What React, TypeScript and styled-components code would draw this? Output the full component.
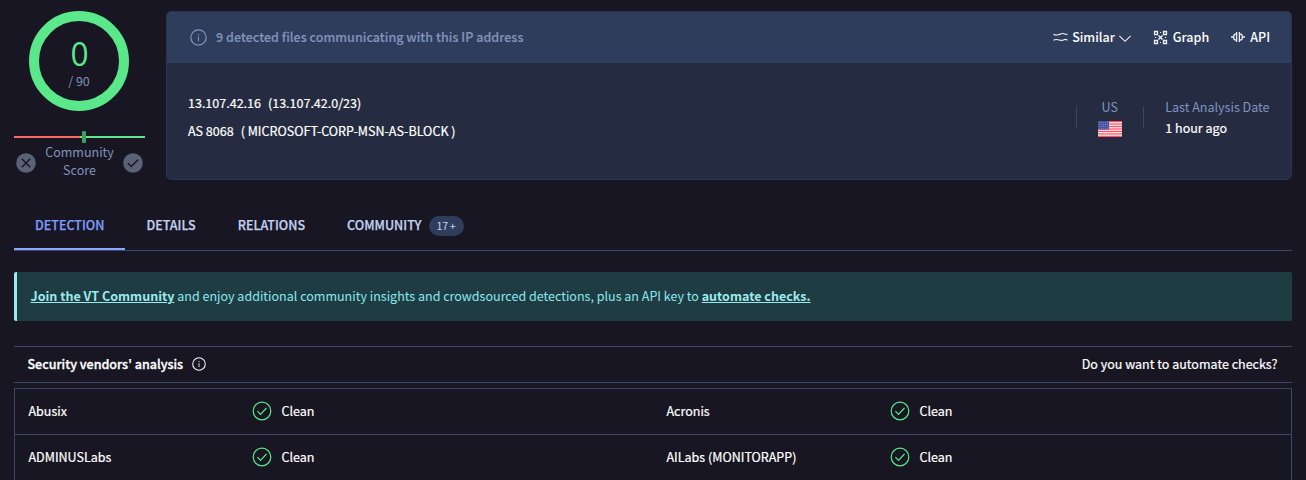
import React from "react";
import styled, { createGlobalStyle } from "styled-components";

const GlobalStyle = createGlobalStyle`
  *, *::before, *::after { box-sizing: border-box; }
  html, body { margin: 0; height: 480px; overflow: hidden; background: #171622; }
  body {
    color: #fff;
    font-family: "Noto Sans CJK SC", "Noto Sans CJK TC", "Liberation Sans", sans-serif;
    font-size: 12.53px;
    line-height: 18px;
  }
  svg { display: block; flex: none; }
`;

const Page = styled.main`
  display: flex;
  flex-direction: column;
  height: 480px;
  padding: 11px 14px 0;
  overflow: hidden;
`;

const Summary = styled.section`
  display: flex;
  flex: none;
  gap: 21px;
  height: 169px;
`;

const ScoreColumn = styled.div`
  display: flex;
  flex-direction: column;
  align-items: center;
  width: 131px;
`;

const Ring = styled.div`
  display: flex;
  flex-direction: column;
  align-items: center;
  width: 100px;
  height: 100px;
  padding-top: 16px;
  border: 10px solid #5ae88a;
  border-radius: 50%;
  margin-right: 1px;
`;

const Score = styled.div`
  margin-left: 1px;
  color: #5ae88a;
  font-size: 33px;
  font-weight: 350;
  line-height: 30px;
`;

const ScoreTotal = styled.div`
  margin-top: 5px;
  color: #8293bd;
  line-height: 18px;
`;

const ScoreBar = styled.div`
  display: flex;
  position: relative;
  width: 131px;
  height: 2px;
  margin-top: 25px;
`;

const BarHalf = styled.div<{ $color: string }>`
  flex: 1;
  background: ${(p) => p.$color};
`;

const BarHandle = styled.span`
  position: absolute;
  left: 68px;
  top: -5px;
  width: 4px;
  height: 12px;
  border-radius: 1px;
  background: #3c9f60;
`;

const Votes = styled.div`
  display: flex;
  justify-content: space-between;
  align-items: flex-start;
  width: 127px;
  margin-top: 5px;
  color: #8293bd;
  text-align: center;
  svg { margin-top: 10px; }
`;

const VoteLabel = styled.div`
  width: 75px;
`;

const Card = styled.div`
  display: flex;
  flex-direction: column;
  flex: 1;
  border: 1px solid #2a344f;
  border-radius: 5px;
  background: #252c42;
  overflow: hidden;
`;

const CardHeader = styled.header`
  display: flex;
  align-items: center;
  height: 51px;
  padding: 0 21px 1px 23px;
  background: #2f3d5c;
`;

const Notice = styled.div`
  display: flex;
  align-items: center;
  gap: 9px;
  color: #8293bd;
  font-weight: 500;
  -webkit-text-stroke: 0.15px currentColor;
  letter-spacing: 0.03px;
`;

const Actions = styled.nav`
  display: flex;
  gap: 22px;
  margin-left: auto;
`;

const Action = styled.a<{ $gap: number }>`
  display: flex;
  align-items: center;
  gap: ${(p) => p.$gap}px;
  color: #fff;
  font-weight: 500;
  svg { opacity: 0.92; }
`;

const CardBody = styled.div`
  display: flex;
  align-items: center;
  flex: 1;
  padding: 0 21.5px 8px 21px;
`;

const Addresses = styled.div`
  display: flex;
  flex-direction: column;
  gap: 10px;
  margin-top: -1px;
  -webkit-text-stroke: 0.2px currentColor;
`;

const AddressLine = styled.div`
  display: flex;
  gap: 7px;
`;

const Facts = styled.div`
  display: flex;
  align-items: center;
  margin-left: auto;
`;

const Divider = styled.span`
  width: 1px;
  height: 21px;
  background: #3a4767;
`;

const Fact = styled.div<{ $center?: boolean }>`
  display: flex;
  flex-direction: column;
  align-items: ${(p) => (p.$center ? "center" : "flex-start")};
  gap: ${(p) => (p.$center ? "5px" : "3px")};
  height: 39px;
  margin-left: ${(p) => (p.$center ? "21px" : "21.5px")};
  margin-right: ${(p) => (p.$center ? "21px" : "0")};
`;

const FactLabel = styled.span`
  color: #8293bd;
`;

const FactValue = styled.span`
  -webkit-text-stroke: 0.2px currentColor;
`;

const Tabs = styled.nav`
  display: flex;
  flex: none;
  height: 50px;
  margin-top: 21px;
  border-bottom: 1px solid #3a4767;
`;

const Tab = styled.a<{ $active?: boolean }>`
  display: flex;
  align-items: center;
  gap: 7px;
  padding: 1px 21px 0;
  border-bottom: 2px solid ${(p) => (p.$active ? "#8aa8ff" : "transparent")};
  color: ${(p) => (p.$active ? "#7d9bf8" : "#c3d0f0")};
  font-weight: 500;
  -webkit-text-stroke: 0.25px currentColor;
`;

const Badge = styled.span`
  width: 35px;
  height: 20px;
  margin-top: 1px;
  border-radius: 10px;
  background: #2f3d5c;
  font-size: 10.7px;
  font-weight: 400;
  line-height: 20px;
  text-align: center;
  word-spacing: -1px;
  -webkit-text-stroke: 0;
`;

const Banner = styled.div`
  flex: none;
  height: 49px;
  margin-top: 21px;
  padding-left: 13.6px;
  border-left: 3px solid #9bebee;
  border-radius: 2px;
  background: #1f3c42;
  color: #8ae8ef;
  line-height: 48px;
  white-space: nowrap;
`;

const BannerLink = styled.a`
  color: #9bebee;
  font-weight: 700;
  text-decoration: underline;
`;

const SectionHead = styled.div`
  display: flex;
  flex: none;
  align-items: center;
  justify-content: space-between;
  height: 37px;
  margin-top: 25px;
  padding: 0 14.5px 1px 13.5px;
  border-top: 1px solid #3d4765;
  border-bottom: 1px solid #3d4765;
`;

const SectionTitle = styled.h2`
  display: flex;
  align-items: center;
  gap: 9px;
  margin: 0;
  font-size: 12.54px;
  font-weight: 500;
  -webkit-text-stroke: 0.3px currentColor;
`;

const SectionLink = styled.a`
  -webkit-text-stroke: 0.2px currentColor;
`;

const Vendors = styled.div`
  display: grid;
  flex: none;
  grid-template-columns: 1fr 1fr;
  margin-top: 5px;
  border: 1px solid #3d4765;
  -webkit-text-stroke: 0.2px currentColor;
`;

const Vendor = styled.div`
  display: flex;
  align-items: center;
  height: 46px;
  padding: 0 13.5px 1px;
  border-bottom: 1px solid #3d4765;
`;

const VendorName = styled.span`
  width: 223.5px;
`;

const Verdict = styled.span`
  display: flex;
  align-items: center;
  gap: 9.4px;
`;

const InfoIcon = ({ size }: { size: number }) => (
  <svg width={size} height={size} viewBox="0 0 18 18" fill="none" stroke="currentColor">
    <circle cx="9" cy="9" r="8.1" strokeWidth="1.3" />
    <path d="M9 8v5M9 5.2v1.3" strokeWidth="1.1" />
  </svg>
);

const VoteIcon = ({ up }: { up?: boolean }) => (
  <svg width="20" height="20" viewBox="0 0 20 20" fill="none" stroke="#171622" strokeWidth="1.5">
    <circle cx="10" cy="10" r="9.8" fill="#596277" stroke="none" />
    <path d={up ? "M5 10.2l3.3 3.3L15 6.8" : "M5.8 5.8l8.4 8.4M14.2 5.8l-8.4 8.4"} />
  </svg>
);

const SimilarIcon = () => (
  <svg width="15" height="16" viewBox="0 0 15 16" fill="none" stroke="currentColor" strokeWidth="1.1">
    <path d="M.5 5.200c2 1.400 3.700 1 5.600.3s3.600-1.400 4.900-.8c1.200.6 2 .9 3.500.5M.5 11.200c2-1 3.700-.9 5.600-.3s3.600.6 4.900-.2c1.200-.7 2-.5 3.500.5" />
  </svg>
);

const ChevronIcon = () => (
  <svg width="12" height="16" viewBox="0 0 12 16" fill="none" stroke="currentColor" strokeWidth="1.1">
    <path d="M.4 6.8L6 12.3l5.6-5.5" />
  </svg>
);

const GraphIcon = () => (
  <svg width="15" height="15" viewBox="0 0 15 15" fill="none" stroke="currentColor">
    <path d="M1.500 1.500h3v3h-3zM10.500 1.500h3v3h-3zM1.500 10.500h3v3h-3zM10.500 10.500h3v3h-3z" strokeWidth="1.3" />
    <path d="M5.500 5.500l4 4M9.500 5.500l-4 4" strokeWidth="1.500" />
    <path d="M7 2.500h1M7 12.500h1M2.500 7v1M12.500 7v1" strokeWidth="1.2" />
  </svg>
);

const ApiIcon = () => (
  <svg width="14" height="14" viewBox="0 0 14 14" fill="none" stroke="currentColor" strokeWidth="1.3">
    <path d="M5.600 2v10M5.600 3.800H5C3.300 3.800 2.600 5.500 2.600 7s.7 3.200 2.400 3.200h.6M0 7h2.600M8.400 2v10M8.400 3.800H9c1.700 0 2.400 1.700 2.400 3.200s-.7 3.200-2.400 3.200h-.6M11.400 7H14" />
  </svg>
);

const CleanIcon = () => (
  <svg width="20" height="20" viewBox="0 0 20 20" fill="none" stroke="#5ae88a" strokeWidth="1.2">
    <circle cx="10" cy="10" r="8.8" />
    <path d="M5.4 10.2l3.1 3.1 6-6.3" />
  </svg>
);

const FlagIcon = () => (
  <svg width="24" height="16" viewBox="0 0 24 16">
    <rect width="24" height="16" fill="#fff0f2" />
    {[0, 1, 2, 3, 4, 5, 6].map((i) => (
      <rect key={i} y={i * 2.46} width="24" height="1.23" fill="#ff5260" />
    ))}
    <rect width="11" height="8.6" fill="#4855a0" />
    {[0, 1, 2, 3].map((r) =>
      [0, 1, 2, 3, 4].map((c) => (
        <circle key={`${r}-${c}`} cx={1.2 + c * 2.1} cy={1.3 + r * 2} r=".4" fill="#c2c7eb" />
      ))
    )}
  </svg>
);

const vendors = ["Abusix", "Acronis", "ADMINUSLabs", "AILabs (MONITORAPP)"];

export default function App() {
  return (
    <Page>
      <GlobalStyle />
      <Summary>
        <ScoreColumn>
          <Ring>
            <Score>0</Score>
            <ScoreTotal>/ 90</ScoreTotal>
          </Ring>
          <ScoreBar>
            <BarHalf $color="#ff6b6b" />
            <BarHalf $color="#5ae88a" />
            <BarHandle />
          </ScoreBar>
          <Votes>
            <VoteIcon />
            <VoteLabel>Community Score</VoteLabel>
            <VoteIcon up />
          </Votes>
        </ScoreColumn>
        <Card>
          <CardHeader>
            <Notice>
              <InfoIcon size={17} />
              9 detected files communicating with this IP address
            </Notice>
            <Actions>
              <Action $gap={4}><SimilarIcon />Similar<ChevronIcon /></Action>
              <Action $gap={5}><GraphIcon />Graph</Action>
              <Action $gap={5}><ApiIcon />API</Action>
            </Actions>
          </CardHeader>
          <CardBody>
            <Addresses>
              <AddressLine><span>13.107.42.16</span><span>(13.107.42.0/23)</span></AddressLine>
              <AddressLine><span>AS 8068</span><span>( MICROSOFT-CORP-MSN-AS-BLOCK )</span></AddressLine>
            </Addresses>
            <Facts>
              <Divider />
              <Fact $center><FactLabel>US</FactLabel><FlagIcon /></Fact>
              <Divider />
              <Fact><FactLabel>Last Analysis Date</FactLabel><FactValue>1 hour ago</FactValue></Fact>
            </Facts>
          </CardBody>
        </Card>
      </Summary>
      <Tabs>
        <Tab $active>DETECTION</Tab>
        <Tab>DETAILS</Tab>
        <Tab>RELATIONS</Tab>
        <Tab>COMMUNITY<Badge>17 +</Badge></Tab>
      </Tabs>
      <Banner>
        <BannerLink>Join the VT Community</BannerLink> and enjoy additional community insights and crowdsourced detections, plus an API key to <BannerLink>automate checks.</BannerLink>
      </Banner>
      <SectionHead>
        <SectionTitle>Security vendors' analysis<InfoIcon size={14} /></SectionTitle>
        <SectionLink>Do you want to automate checks?</SectionLink>
      </SectionHead>
      <Vendors>
        {vendors.map((name) => (
          <Vendor key={name}>
            <VendorName>{name}</VendorName>
            <Verdict><CleanIcon />Clean</Verdict>
          </Vendor>
        ))}
      </Vendors>
    </Page>
  );
}
